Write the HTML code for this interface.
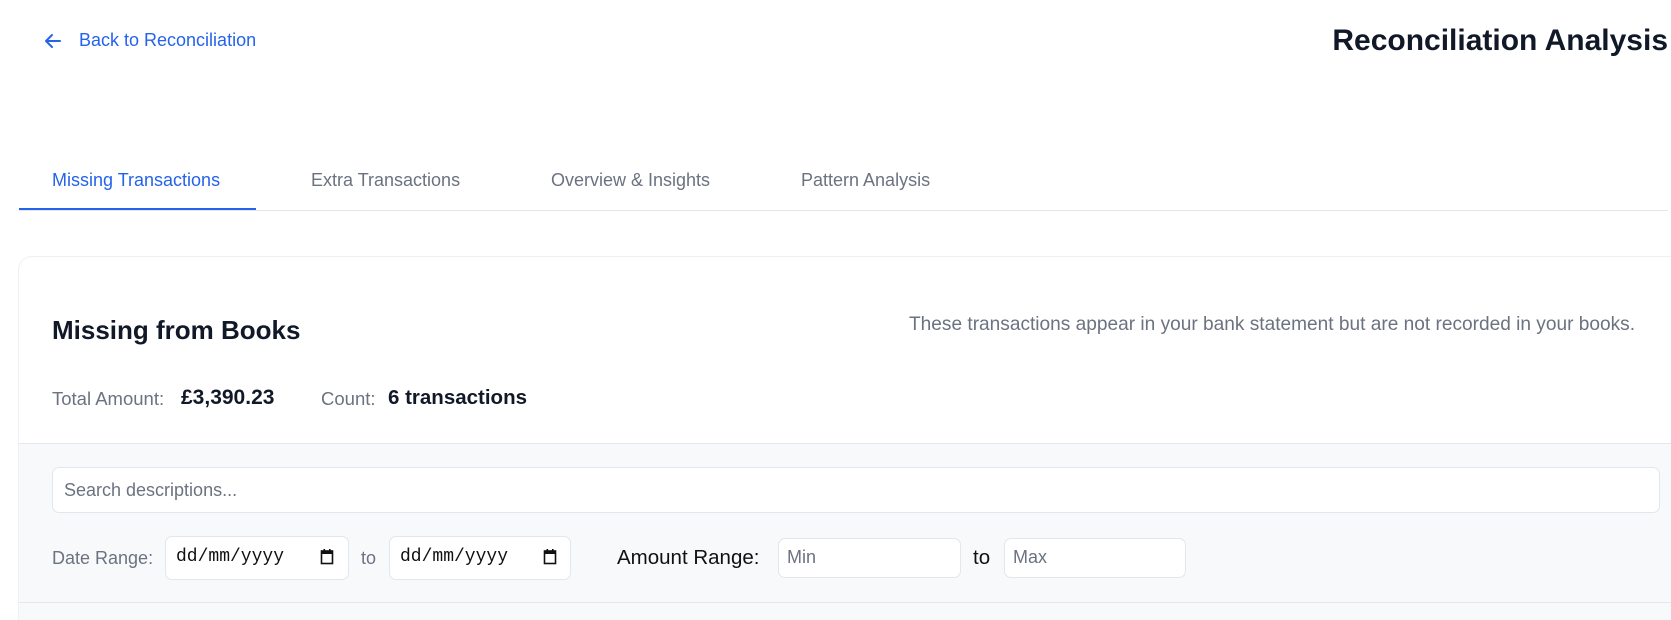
<!DOCTYPE html>
<html style="width:1671px;height:620px;overflow:hidden"><head><meta charset="utf-8"><style>
*{box-sizing:border-box;margin:0;padding:0}
body{width:1671px;height:620px;background:#fff;font-family:"Liberation Sans",sans-serif;position:relative;overflow:hidden}
.a{position:absolute;white-space:nowrap}
.inp{position:absolute;background:#fff;border:1px solid #e3e6ea;border-radius:7px}
</style></head><body>
<svg class="a" style="left:43px;top:31px" width="20" height="20" viewBox="0 0 20 20"><path d="M17 10H3M9 4L3 10l6 6" fill="none" stroke="#2563eb" stroke-width="2" stroke-linecap="round" stroke-linejoin="round"/></svg>
<div class="a" style="left:79px;top:30px;font-size:18px;color:#2563eb">Back to Reconciliation</div>
<div class="a" style="right:3px;top:24px;font-size:30px;font-weight:bold;color:#111827">Reconciliation Analysis</div>

<div class="a" style="left:19px;top:210px;width:1649px;height:1px;background:#e5e7eb"></div>
<div class="a" style="left:19px;top:208px;width:237px;height:2px;background:#2563eb"></div>
<div class="a" style="left:52px;top:170px;font-size:18px;color:#2563eb">Missing Transactions</div>
<div class="a" style="left:311px;top:170px;font-size:18px;color:#6b7280">Extra Transactions</div>
<div class="a" style="left:551px;top:170px;font-size:18px;color:#6b7280">Overview &amp; Insights</div>
<div class="a" style="left:801px;top:170px;font-size:18px;color:#6b7280">Pattern Analysis</div>

<div class="a" style="left:18px;top:256px;width:1660px;height:364px;border:1px solid #eef0f2;border-bottom:none;border-right:none;border-radius:14px 0 0 0;background:#fff;overflow:hidden">
  <div class="a" style="left:0;top:186px;width:100%;height:200px;background:#f8f9fb;border-top:1px solid #e5e7eb"></div>
  <div class="a" style="left:0;top:345px;width:100%;height:1px;background:#e5e7eb"></div>
</div>
<div class="a" style="left:52px;top:315px;font-size:26px;font-weight:bold;color:#111827">Missing from Books</div>
<div class="a" style="right:36px;top:314px;font-size:19.1px;color:#6b7280">These transactions appear in your bank statement but are not recorded in your books.</div>
<div class="a" style="left:52px;top:388px;font-size:18.5px;color:#6b7280">Total Amount:</div>
<div class="a" style="left:181px;top:386px;font-size:21px;font-weight:bold;color:#111827">£3,390.23</div>
<div class="a" style="left:321px;top:388px;font-size:18.5px;color:#6b7280">Count:</div>
<div class="a" style="left:388px;top:386px;font-size:20.5px;font-weight:bold;color:#111827">6 transactions</div>

<div class="inp" style="left:52px;top:467px;width:1608px;height:46px"></div>
<div class="a" style="left:64px;top:480px;font-size:18px;color:#6b7280">Search descriptions...</div>

<div class="a" style="left:52px;top:548px;font-size:18px;color:#6b7280">Date Range:</div>
<div class="inp" style="left:165px;top:536px;width:184px;height:44px"></div>
<div class="a" style="left:176px;top:547px;font-size:18px;font-family:'Liberation Mono',monospace;color:#111">dd/mm/yyyy</div>
<svg class="a" style="left:320px;top:548px" width="14" height="17" viewBox="0 0 14 17"><rect x="1.5" y="3" width="11" height="12.5" fill="none" stroke="#111" stroke-width="1.6"/><rect x="1.5" y="3" width="11" height="3" fill="#111"/><rect x="3.5" y="1" width="1.6" height="3" fill="#111"/><rect x="9" y="1" width="1.6" height="3" fill="#111"/></svg>
<div class="a" style="left:361px;top:548px;font-size:18px;color:#6b7280">to</div>
<div class="inp" style="left:389px;top:536px;width:182px;height:44px"></div>
<div class="a" style="left:400px;top:547px;font-size:18px;font-family:'Liberation Mono',monospace;color:#111">dd/mm/yyyy</div>
<svg class="a" style="left:543px;top:548px" width="14" height="17" viewBox="0 0 14 17"><rect x="1.5" y="3" width="11" height="12.5" fill="none" stroke="#111" stroke-width="1.6"/><rect x="1.5" y="3" width="11" height="3" fill="#111"/><rect x="3.5" y="1" width="1.6" height="3" fill="#111"/><rect x="9" y="1" width="1.6" height="3" fill="#111"/></svg>
<div class="a" style="left:617px;top:546px;font-size:20.5px;color:#111">Amount Range:</div>
<div class="inp" style="left:778px;top:538px;width:183px;height:40px"></div>
<div class="a" style="left:787px;top:547px;font-size:18px;color:#6b7280">Min</div>
<div class="a" style="left:973px;top:546px;font-size:20.5px;color:#111">to</div>
<div class="inp" style="left:1004px;top:538px;width:182px;height:40px"></div>
<div class="a" style="left:1013px;top:547px;font-size:18px;color:#6b7280">Max</div>
</body></html>
